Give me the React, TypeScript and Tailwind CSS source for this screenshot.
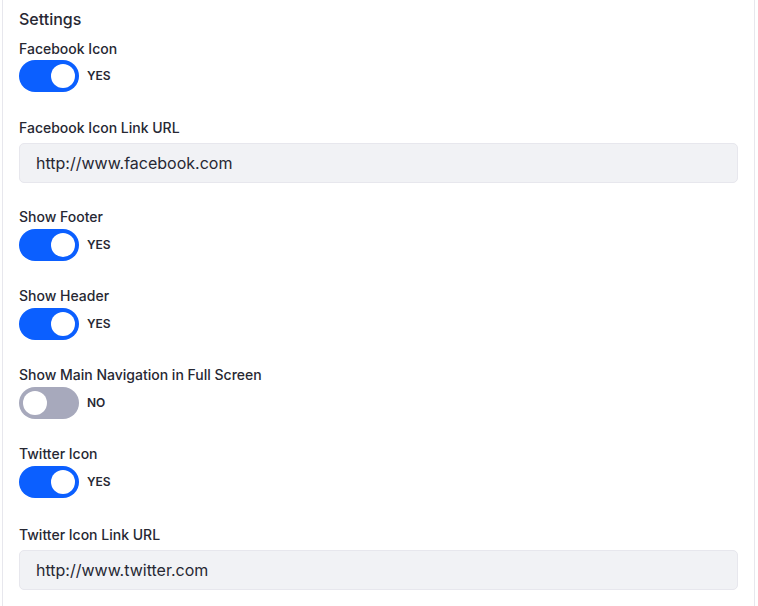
import React from "react";

function Toggle({ on, label, title, first }: { on: boolean; label: string; title: string; first?: boolean }) {
  return (
    <div className={first ? "mt-[8px]" : "mt-[25px]"}>
      <div className={`text-[14px] leading-[20px] font-medium text-[#272833] ${first ? "mb-[1px]" : "mb-[2px]"}`}>{title}</div>
      <div className="flex items-center">
        <div className={`relative w-[60px] h-[32px] rounded-full ${on ? "bg-[#0b5fff]" : "bg-[#a7a9bc]"}`}>
          <div className={`absolute top-[4px] w-[24px] h-[24px] rounded-full bg-white ${on ? "left-[32px]" : "left-[4px]"}`} />
        </div>
        <span className="ml-[8px] text-[12px] font-semibold text-[#272833] leading-none">{label}</span>
      </div>
    </div>
  );
}

function UrlField({ title, value, mt }: { title: string; value: string; mt: string }) {
  return (
    <div className={mt}>
      <div className="text-[14px] leading-[20px] font-medium text-[#272833] mb-[5px]">{title}</div>
      <div className="h-[40px] rounded-[5px] border border-[#e7e7ed] bg-[#f1f2f5] flex items-center px-[16px] text-[16px] text-[#272833]">
        {value}
      </div>
    </div>
  );
}

export default function App() {
  return (
    <div className="w-[758px] h-[606px] bg-white overflow-hidden pl-[2px]" style={{ fontFamily: "Inter, 'Noto Sans', sans-serif" }}>
      <div className="w-[753px] h-[606px] border-l border-r border-[#e7e7ed] bg-white px-[16px] pt-[7px]">
        <div className="text-[16px] leading-[24px] font-medium text-[#272833]">Settings</div>
        <Toggle first on label="YES" title="Facebook Icon" />
        <UrlField mt="mt-[26px]" title="Facebook Icon Link URL" value="http://www.facebook.com" />
        <div className="mt-[-1px]">
          <Toggle on label="YES" title="Show Footer" />
        </div>
        <Toggle on label="YES" title="Show Header" />
        <Toggle on={false} label="NO" title="Show Main Navigation in Full Screen" />
        <Toggle on label="YES" title="Twitter Icon" />
        <UrlField mt="mt-[27px]" title="Twitter Icon Link URL" value="http://www.twitter.com" />
      </div>
    </div>
  );
}
